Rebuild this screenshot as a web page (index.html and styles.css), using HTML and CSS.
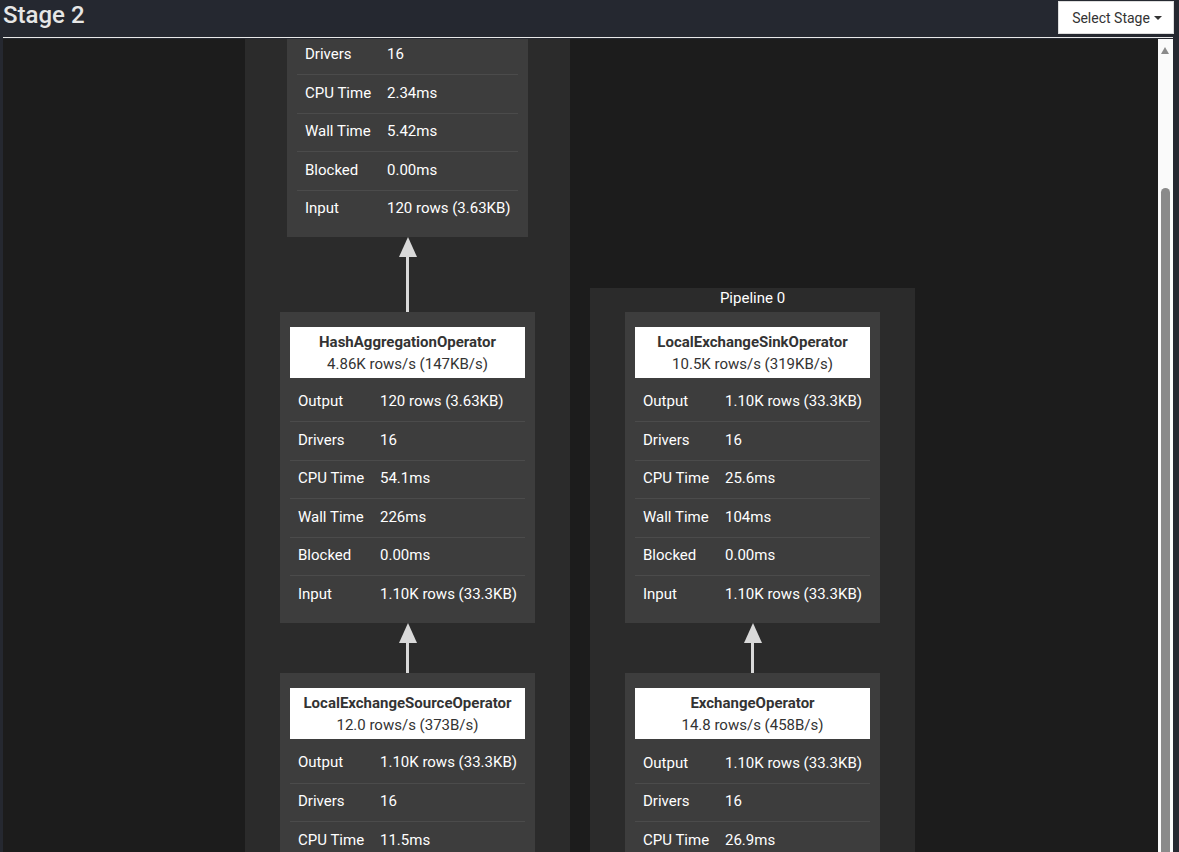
FILE: index.html
```html
<!DOCTYPE html>
<html>
<head>
<meta charset="utf-8">
<link rel="stylesheet" href="styles.css">
</head>
<body>
<div class="header">
  <h2 class="title">Stage 2</h2>
  <button class="select-btn">Select Stage <span class="caret"></span></button>
</div>
<div class="rule"></div>
<div class="main">
  <div class="canvas">
    <div class="pipeline pipeline-left">
      <div class="card card-narrow card-cut">
        <div class="row first"><span class="lbl">Drivers</span><span class="val">16</span></div>
        <div class="row"><span class="lbl">CPU Time</span><span class="val">2.34ms</span></div>
        <div class="row"><span class="lbl">Wall Time</span><span class="val">5.42ms</span></div>
        <div class="row"><span class="lbl">Blocked</span><span class="val">0.00ms</span></div>
        <div class="row"><span class="lbl">Input</span><span class="val">120 rows (3.63KB)</span></div>
      </div>
      <div class="arrow arrow-long"><div class="head"></div><div class="shaft"></div></div>
      <div class="card">
        <div class="op-head"><div class="op-name">HashAggregationOperator</div><div class="op-rate">4.86K rows/s (147KB/s)</div></div>
        <div class="row first"><span class="lbl">Output</span><span class="val">120 rows (3.63KB)</span></div>
        <div class="row"><span class="lbl">Drivers</span><span class="val">16</span></div>
        <div class="row"><span class="lbl">CPU Time</span><span class="val">54.1ms</span></div>
        <div class="row"><span class="lbl">Wall Time</span><span class="val">226ms</span></div>
        <div class="row"><span class="lbl">Blocked</span><span class="val">0.00ms</span></div>
        <div class="row"><span class="lbl">Input</span><span class="val">1.10K rows (33.3KB)</span></div>
      </div>
      <div class="arrow arrow-short"><div class="head"></div><div class="shaft"></div></div>
      <div class="card">
        <div class="op-head"><div class="op-name">LocalExchangeSourceOperator</div><div class="op-rate">12.0 rows/s (373B/s)</div></div>
        <div class="row first"><span class="lbl">Output</span><span class="val">1.10K rows (33.3KB)</span></div>
        <div class="row"><span class="lbl">Drivers</span><span class="val">16</span></div>
        <div class="row"><span class="lbl">CPU Time</span><span class="val">11.5ms</span></div>
        <div class="row"><span class="lbl">Wall Time</span><span class="val">20.1ms</span></div>
      </div>
    </div>
    <div class="pipeline pipeline-right">
      <div class="pipe-label">Pipeline 0</div>
      <div class="card">
        <div class="op-head"><div class="op-name">LocalExchangeSinkOperator</div><div class="op-rate">10.5K rows/s (319KB/s)</div></div>
        <div class="row first"><span class="lbl">Output</span><span class="val">1.10K rows (33.3KB)</span></div>
        <div class="row"><span class="lbl">Drivers</span><span class="val">16</span></div>
        <div class="row"><span class="lbl">CPU Time</span><span class="val">25.6ms</span></div>
        <div class="row"><span class="lbl">Wall Time</span><span class="val">104ms</span></div>
        <div class="row"><span class="lbl">Blocked</span><span class="val">0.00ms</span></div>
        <div class="row"><span class="lbl">Input</span><span class="val">1.10K rows (33.3KB)</span></div>
      </div>
      <div class="arrow arrow-short"><div class="head"></div><div class="shaft"></div></div>
      <div class="card">
        <div class="op-head"><div class="op-name">ExchangeOperator</div><div class="op-rate">14.8 rows/s (458B/s)</div></div>
        <div class="row first"><span class="lbl">Output</span><span class="val">1.10K rows (33.3KB)</span></div>
        <div class="row"><span class="lbl">Drivers</span><span class="val">16</span></div>
        <div class="row"><span class="lbl">CPU Time</span><span class="val">26.9ms</span></div>
        <div class="row"><span class="lbl">Wall Time</span><span class="val">40.2ms</span></div>
      </div>
    </div>
  </div>
  <div class="scrollbar">
    <div class="sb-up"></div>
    <div class="sb-thumb"></div>
  </div>
</div>
</body>
</html>
```
FILE: styles.css
```css
html, body {
  margin: 0;
  padding: 0;
  height: 100%;
  overflow: hidden;
}
body {
  background: #252830;
  font-family: Roboto, "Liberation Sans", sans-serif;
  color: #fff;
}
.header {
  height: 37px;
  display: flex;
  justify-content: space-between;
  align-items: flex-start;
  padding-left: 3px;
  padding-right: 5px;
  box-sizing: border-box;
}
.title {
  margin: 0;
  font-size: 24px;
  font-weight: 500;
  line-height: 30px;
  color: #e6e6e6;
}
.select-btn {
  margin-top: 1px;
  height: 33px;
  width: 116px;
  background: #fff;
  border: 1px solid #ddd;
  border-radius: 0;
  font-family: Roboto, "Liberation Sans", sans-serif;
  font-size: 14px;
  color: #333;
  padding: 0 0 0 2px;
  display: flex;
  align-items: center;
  justify-content: center;
  gap: 4px;
}
.caret {
  display: inline-block;
  width: 0;
  height: 0;
  border-left: 4px solid transparent;
  border-right: 4px solid transparent;
  border-top: 4px solid #333;
  margin-top: 1px;
}
.rule {
  height: 1px;
  background: #e8e8e8;
  margin: 0 6px 0 3px;
}
.main {
  display: flex;
  height: calc(100vh - 38px);
  padding: 1px 6px 0 3px;
  box-sizing: border-box;
}
.canvas {
  flex: 1;
  background: #1c1c1c;
  position: relative;
  overflow: hidden;
  display: flex;
  align-items: flex-start;
  gap: 20px;
  padding-left: 242px;
}
.pipeline {
  width: 325px;
  background: #2b2b2b;
  display: flex;
  flex-direction: column;
  align-items: center;
  flex-shrink: 0;
}
.pipeline-left {
  height: 100%;
}
.pipeline-right {
  margin-top: 249px;
  height: 600px;
}
.pipe-label {
  font-size: 15px;
  height: 24px;
  line-height: 20px;
  text-align: center;
  flex-shrink: 0;
}
.card {
  width: 255px;
  background: #3d3d3d;
  padding: 15px 10px 10px;
  box-sizing: border-box;
  flex-shrink: 0;
}
.card-narrow {
  width: 241px;
}
.card-cut {
  margin-top: -3px;
  padding-top: 0;
  padding-bottom: 9px;
}
.op-head {
  background: #fff;
  color: #333;
  text-align: center;
  height: 51px;
  box-sizing: border-box;
  padding-top: 4px;
  margin-bottom: 5px;
  font-size: 15px;
  line-height: 22px;
}
.op-name {
  font-weight: 700;
}
.row {
  display: flex;
  align-items: center;
  height: 38.4px;
  border-top: 1px solid #4b4b4b;
  box-sizing: border-box;
  padding-left: 8px;
  padding-bottom: 2px;
  font-size: 15px;
  white-space: nowrap;
}
.row.first {
  border-top: none;
}
.lbl {
  width: 82px;
  flex-shrink: 0;
}
.arrow {
  display: flex;
  flex-direction: column;
  align-items: center;
  flex-shrink: 0;
}
.arrow-long {
  height: 75px;
}
.arrow-short {
  height: 50px;
}
.head {
  width: 0;
  height: 0;
  border-left: 9px solid transparent;
  border-right: 9px solid transparent;
  border-bottom: 20px solid #d9d9d9;
}
.shaft {
  width: 3px;
  flex: 1;
  background: #d9d9d9;
}
.scrollbar {
  width: 15px;
  background: #fafafa;
  position: relative;
  flex-shrink: 0;
}
.sb-up {
  position: absolute;
  left: 3px;
  top: 8px;
  width: 0;
  height: 0;
  border-left: 4.5px solid transparent;
  border-right: 4.5px solid transparent;
  border-bottom: 7px solid #8a8a8a;
}
.sb-thumb {
  position: absolute;
  left: 3px;
  top: 149px;
  width: 9px;
  bottom: 0;
  background: #8a8a8a;
  border-radius: 5px 5px 0 0;
}
```
